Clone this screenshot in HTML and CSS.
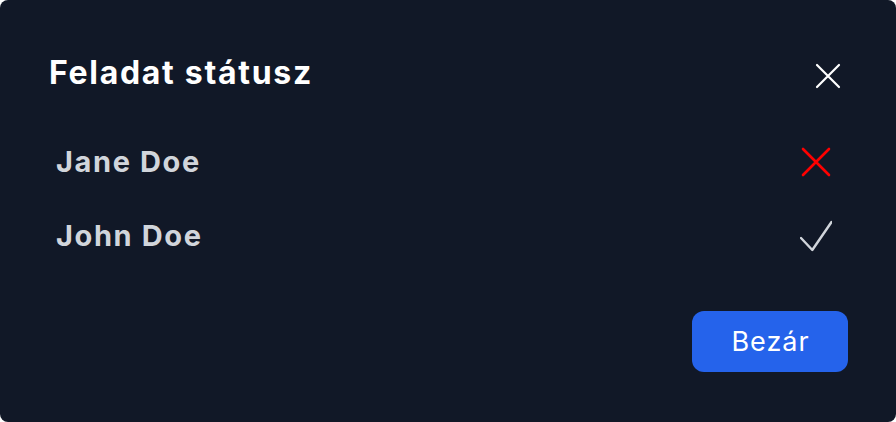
FILE: index.html
```html
<!DOCTYPE html>
<html lang="hu">
<head>
<meta charset="utf-8">
<title>Feladat státusz</title>
<link rel="stylesheet" href="styles.css">
</head>
<body>
<div class="modal">
  <div class="header">
    <h2 class="title">Feladat státusz</h2>
    <button class="close" aria-label="Bezár">
      <svg width="40" height="40" viewBox="0 0 40 40"><path d="M9 9 L31 31 M31 9 L9 31" stroke="#ffffff" stroke-width="2.2" stroke-linecap="round" fill="none"/></svg>
    </button>
  </div>
  <ul class="list">
    <li class="row"><span class="name">Jane Doe</span>
      <svg class="icon" width="32" height="32" viewBox="0 0 32 32"><path d="M3 3 L29 29 M29 3 L3 29" stroke="#ff0000" stroke-width="2.6" stroke-linecap="round" fill="none"/></svg>
    </li>
    <li class="row"><span class="name">John Doe</span>
      <svg class="icon" width="32" height="32" viewBox="0 0 32 32"><path d="M1 18 L12.3 30 L31.5 2" stroke="#d1d5db" stroke-width="2.4" stroke-linecap="round" stroke-linejoin="round" fill="none"/></svg>
    </li>
  </ul>
  <div class="footer">
    <button class="btn">Bezár</button>
  </div>
</div>
</body>
</html>
```
FILE: styles.css
```css
html, body {
  margin: 0;
  padding: 0;
  background: #ffffff;
}
body {
  font-family: Inter, "Noto Sans", sans-serif;
}
.modal {
  width: 896px;
  height: 422px;
  box-sizing: border-box;
  background: #111827;
  border-radius: 8px;
  padding: 53px 48px 50px 48px;
  display: flex;
  flex-direction: column;
}
.header {
  display: flex;
  justify-content: space-between;
  align-items: flex-start;
  height: 40px;
}
.title {
  margin: 0;
  font-size: 32px;
  line-height: 40px;
  font-weight: 700;
  letter-spacing: 1.7px;
  color: #ffffff;
  padding-left: 1px;
}
.close {
  margin-top: 3px;
  width: 40px;
  height: 40px;
  padding: 0;
  border: 0;
  background: transparent;
  display: flex;
}
.list {
  list-style: none;
  margin: 49px 0 0 0;
  padding: 0;
  display: flex;
  flex-direction: column;
  gap: 34px;
}
.row {
  display: flex;
  justify-content: space-between;
  align-items: center;
  height: 40px;
  padding: 0 16px 0 8px;
}
.name {
  font-size: 29px;
  line-height: 40px;
  font-weight: 700;
  letter-spacing: 1.6px;
  color: #d1d5db;
}
.icon {
  display: block;
}
.footer {
  margin-top: 55px;
  display: flex;
  justify-content: flex-end;
}
.btn {
  width: 156px;
  height: 61px;
  border: 0;
  border-radius: 12px;
  background: #2563eb;
  color: #ffffff;
  font-family: Inter, "Noto Sans", sans-serif;
  font-size: 27px;
  font-weight: 400;
  letter-spacing: 1px;
  padding: 0 0 0 1px;
}
```
